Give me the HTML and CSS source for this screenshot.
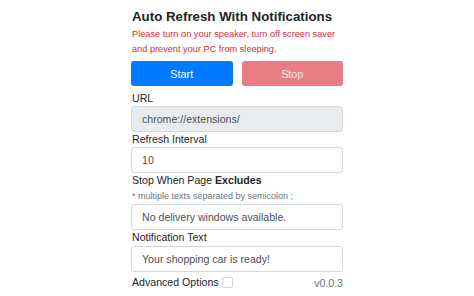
FILE: index.html
```html
<!DOCTYPE html>
<html>
<head>
<meta charset="utf-8">
<link rel="stylesheet" href="styles.css">
</head>
<body>
<div class="panel">
  <h1 class="title">Auto Refresh With Notifications</h1>
  <p class="warning">Please turn on your speaker, turn off screen saver and prevent your PC from sleeping.</p>
  <div class="buttons">
    <button class="btn btn-start">Start</button>
    <button class="btn btn-stop">Stop</button>
  </div>
  <div class="field">
    <label class="label">URL</label>
    <div class="input input-readonly">chrome://extensions/</div>
  </div>
  <div class="field">
    <label class="label">Refresh Interval</label>
    <div class="input">10</div>
  </div>
  <div class="field">
    <label class="label">Stop When Page <b>Excludes</b></label>
    <div class="note">* multiple texts separated by semicolon ;</div>
    <div class="input">No delivery windows available.</div>
  </div>
  <div class="field field-notify">
    <label class="label">Notification Text</label>
    <div class="input">Your shopping car is ready!</div>
  </div>
  <div class="footer">
    <span class="label">Advanced Options</span>
    <span class="checkbox"></span>
    <span class="version">v0.0.3</span>
  </div>
</div>
</body>
</html>
```

FILE: styles.css
```css
html, body {
  margin: 0;
  padding: 0;
  background: #ffffff;
}
body {
  font-family: "Liberation Sans", Arial, sans-serif;
  color: #212529;
}
.panel {
  width: 212px;
  margin: 0 auto;
  padding-top: 8px;
  display: flex;
  flex-direction: column;
}
.title {
  margin: 0 0 0 1px;
  font-size: 13.3px;
  line-height: 18px;
  font-weight: 700;
  white-space: nowrap;
}
.warning {
  margin: 1px 0 0 1px;
  font-size: 9.2px;
  line-height: 15px;
  color: #e02b36;
}
.buttons {
  display: flex;
  gap: 9px;
  margin-top: 4px;
}
.btn {
  flex: 1;
  height: 25px;
  border: none;
  border-radius: 3px;
  font-family: inherit;
  font-size: 10.8px;
  color: #ffffff;
  padding: 0;
}
.btn-start {
  background: #007bff;
}
.btn-stop {
  background: #e87d86;
  color: #fbe5e7;
}
.field {
  display: flex;
  flex-direction: column;
}
.buttons + .field {
  margin-top: 5px;
}
.label {
  font-size: 10.6px;
  line-height: 15px;
  padding-left: 1px;
}
.note {
  font-size: 9px;
  line-height: 15px;
  color: #6c757d;
  padding-left: 1px;
  margin-top: 1px;
}
.input {
  height: 26px;
  box-sizing: border-box;
  border: 1px solid #d5d9dd;
  border-radius: 3px;
  font-size: 10.6px;
  line-height: 24px;
  padding-left: 10px;
  color: #495057;
  background: #ffffff;
}
.input-readonly {
  background: #e9ecef;
}
.field-notify .input {
  margin-top: 1px;
}
.footer {
  display: flex;
  align-items: center;
  margin-top: 3px;
  height: 15px;
}
.checkbox {
  width: 9px;
  height: 9px;
  border: 1px solid #d0d4d8;
  border-radius: 2px;
  margin-left: 3px;
}
.version {
  margin-left: auto;
  font-size: 10.6px;
  color: #6c757d;
}
```
